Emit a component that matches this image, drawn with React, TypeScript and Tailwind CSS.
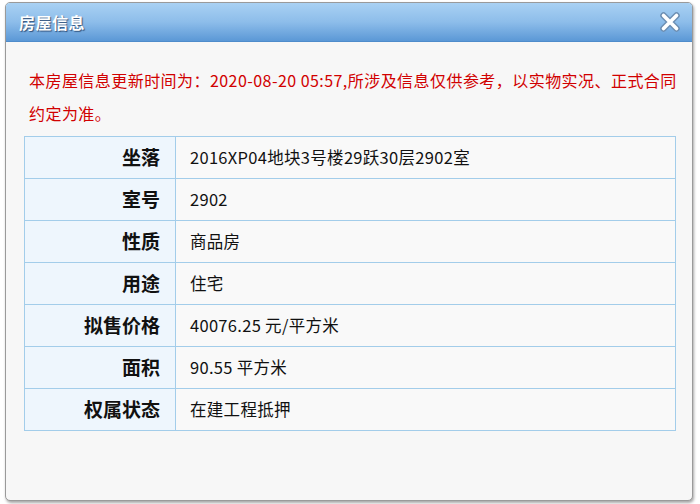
import React from 'react';

interface Row {
  label: string;
  value: string;
}

const rows: Row[] = [
  { label: '坐落', value: '2016XP04地块3号楼29跃30层2902室' },
  { label: '室号', value: '2902' },
  { label: '性质', value: '商品房' },
  { label: '用途', value: '住宅' },
  { label: '拟售价格', value: '40076.25 元/平方米' },
  { label: '面积', value: '90.55 平方米' },
  { label: '权属状态', value: '在建工程抵押' },
];

function CloseIcon() {
  return (
    <svg width="20" height="20" viewBox="0 0 20 20">
      <path d="M3.5 3.5 L16.5 16.5 M16.5 3.5 L3.5 16.5" stroke="#6d8fb3" strokeWidth="6.5" strokeLinecap="round" fill="none" />
      <path d="M3.5 3.5 L16.5 16.5 M16.5 3.5 L3.5 16.5" stroke="#ffffff" strokeWidth="3.6" strokeLinecap="round" fill="none" />
    </svg>
  );
}

export default function App() {
  return (
    <div className="w-[700px] h-[504px] bg-white pt-[2px] pl-[5px] overflow-hidden font-['Noto_Sans_CJK_SC',sans-serif]">
      <div className="w-[688px] h-[499px] flex flex-col rounded-[5px] border border-[#9a9a9a] bg-[#f7f7f7] shadow-[1px_2px_3px_rgba(0,0,0,0.35)] overflow-hidden">
        <div className="h-[39px] shrink-0 flex items-center justify-between pl-[13px] pr-[12px] border-b border-[#4f8ccb] bg-gradient-to-b from-[#a9d1f3] via-[#8dbdea] to-[#5b98d6]">
          <span className="text-[16px] font-bold text-white tracking-[0.5px] [text-shadow:1px_1px_1px_rgba(40,70,110,0.9)]">房屋信息</span>
          <CloseIcon />
        </div>

        <div className="flex flex-col pt-[22px] pl-[18px] pr-[10px]">
          <p className="pl-[5px] text-[16px] leading-[33px] tracking-[0.45px] text-[#d10000]">
            本房屋信息更新时间为：2020-08-20 05:57,所涉及信息仅供参考，以实物实况、正式合同约定为准。
          </p>

          <table className="mt-[6px] w-[652px] border-collapse">
            <tbody>
              {rows.map((r) => (
                <tr key={r.label} className="h-[42px]">
                  <td className="w-[151px] border border-[#a3cdea] bg-[#eef6fd] pr-[15px] text-right text-[19px] font-bold text-[#111]">
                    {r.label}
                  </td>
                  <td className="border border-[#a3cdea] bg-[#f9f9f9] pl-[14px] text-[16.5px] tracking-[0.3px] text-[#111]">
                    {r.value}
                  </td>
                </tr>
              ))}
            </tbody>
          </table>
        </div>
      </div>
    </div>
  );
}
